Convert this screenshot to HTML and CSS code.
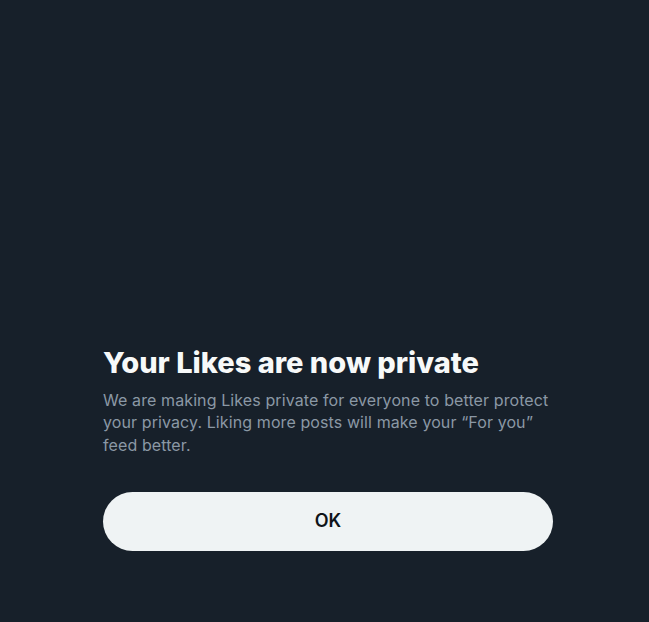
FILE: index.html
```html
<!DOCTYPE html>
<html lang="en">
<head>
    <meta charset="UTF-8">
    <meta name="viewport" content="width=device-width, initial-scale=1.0">
    <title>Your Likes are now private</title>
    <link rel="stylesheet" href="styles.css">
</head>
<body>
    <!-- Likes notice sheet -->
    <div class="sheet">
        <div class="notice">
            <h1>Your Likes are now private</h1>
            <p>We are making Likes private for everyone to better protect your privacy. Liking more posts will make your “For you” feed better.</p>
            <button class="ok-button" type="button">OK</button>
        </div>
    </div>
</body>
</html>
```

FILE: styles.css
```css
html, body {
    height: 100%;
}

body {
    margin: 0;
    padding: 0;
    background: #17202a;
    color: #e7e9ea;
    font-family: Inter, 'Noto Sans', sans-serif;
}

.sheet {
    height: 100%;
    display: flex;
    flex-direction: column;
    justify-content: flex-end;
    align-items: flex-start;
    padding: 0 0 71px 103px;
    box-sizing: border-box;
}

.notice {
    width: 450px;
}

h1 {
    margin: 0;
    font-size: 29px;
    line-height: 36px;
    font-weight: 800;
    color: #f7f9f9;
}

.notice p {
    margin: 8px 0 0;
    font-size: 16px;
    line-height: 22.5px;
    letter-spacing: 0.1px;
    color: #8b98a5;
}

.ok-button {
    display: block;
    width: 100%;
    height: 59px;
    margin-top: 36px;
    padding: 0 0 2px;
    border: none;
    border-radius: 30px;
    background: #eff3f4;
    color: #0f1419;
    font-family: inherit;
    font-size: 18px;
    font-weight: 600;
    cursor: pointer;
}
```
